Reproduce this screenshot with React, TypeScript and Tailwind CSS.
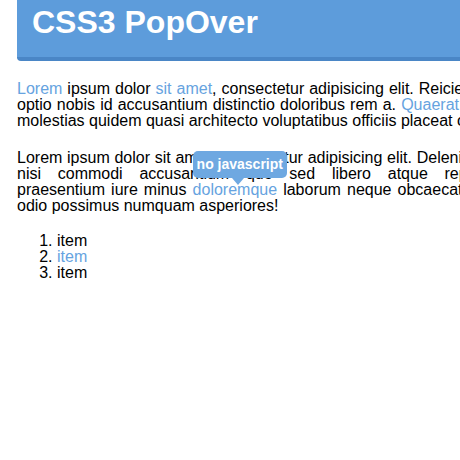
export default function App() {
  return (
    <div className="w-[460px] h-[460px] overflow-hidden bg-white font-['Liberation_Sans',Arial,sans-serif] text-black">
      <div className="ml-[17px] w-[480px]">
        <h1 className="h-[61px] mb-[20px] pt-[6px] pl-[15px] bg-[#5d9cdb] border-b-[4px] border-[#4a86c6] rounded-b-[4px] text-white text-[32px] font-bold leading-none">
          CSS3 PopOver
        </h1>

        <p className="mb-[21px] text-[16px] leading-[16px] text-justify">
          <a className="text-[#66a3e0]">Lorem</a> ipsum dolor <a className="text-[#66a3e0]">sit amet</a>, consectetur
          adipisicing elit. Reiciendis, optio nobis id accusantium distinctio doloribus rem a.{' '}
          <a className="text-[#66a3e0]">Quaerat</a> illum molestias quidem quasi architecto voluptatibus officiis
          placeat odit.
        </p>

        <p className="mb-[19px] text-[16px] leading-[16px] text-justify">
          Lorem ipsum dolor sit amet, consectetur adipisicing elit. Deleniti aut nisi commodi accusantium quo sed
          libero atque repellat praesentium iure minus{' '}
          <span className="relative">
            <a className="text-[#66a3e0]">doloremque</a>
            <span className="absolute left-0 bottom-[calc(100%+3px)] whitespace-nowrap rounded-[5px] bg-[#6ea8e1] px-[4px] py-[5px] text-[14px] leading-[17px] font-bold text-white">
              no javascript
              <span className="absolute top-full left-[39px] h-0 w-0 border-x-[6px] border-x-transparent border-t-[7px] border-t-[#6ea8e1]" />
            </span>
          </span>{' '}
          laborum neque obcaecati iste odio possimus numquam asperiores!
        </p>

        <ol className="list-decimal pl-[40px] text-[16px] leading-[16px]">
          <li>item</li>
          <li>
            <a className="text-[#66a3e0]">item</a>
          </li>
          <li>item</li>
        </ol>
      </div>
    </div>
  );
}
